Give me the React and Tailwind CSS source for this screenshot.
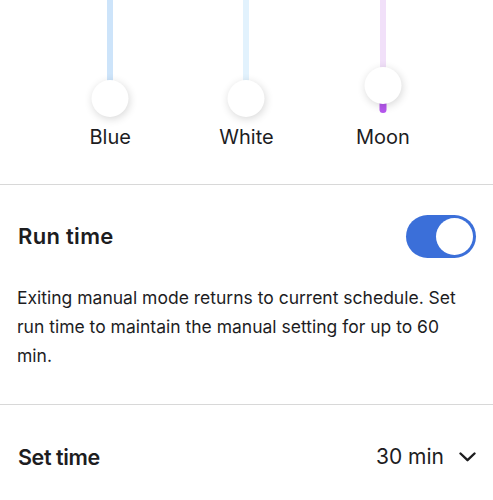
import React from 'react';

const sliders = [
  { label: 'Blue', track: 'bg-[#cde4fa]', knobTop: 'top-[80px]', fill: null },
  { label: 'White', track: 'bg-[#e2f2fd]', knobTop: 'top-[80px]', fill: null },
  { label: 'Moon', track: 'bg-[#f1e0f9]', knobTop: 'top-[67px]', fill: 'bg-[#b657ee]' },
];

function Slider({ s }) {
  return (
    <div className="flex flex-col items-center">
      <div className="relative h-[118px] w-[40px]">
        <div className={`absolute left-1/2 top-0 h-[90px] w-[6px] -translate-x-1/2 ${s.track}`} />
        {s.fill && (
          <div className={`absolute left-1/2 top-[85px] h-[28px] w-[7px] -translate-x-1/2 rounded-b-full ${s.fill}`} />
        )}
        <div
          className={`absolute left-1/2 h-[37px] w-[37px] -translate-x-1/2 rounded-full bg-white shadow-[1px_2px_8px_rgba(0,0,0,0.16)] ${s.knobTop}`}
        />
      </div>
      <span className="mt-[7px] text-[20px] leading-[24px] text-[#1d1d1f]">{s.label}</span>
    </div>
  );
}

export default function App() {
  return (
    <div className="h-[500px] w-full overflow-hidden bg-white font-['Inter',sans-serif] text-[#1d1d1f]">
      <div className="grid h-[184px] grid-cols-3 px-[42px]">
        {sliders.map((s) => (
          <Slider key={s.label} s={s} />
        ))}
      </div>

      <div className="border-t border-[#d8d8d8]">
        <div className="flex items-center justify-between pl-[18px] pr-[17px] pt-[30px]">
          <span className="text-[22px] font-semibold tracking-[0.3px]">Run time</span>
          <div className="flex h-[43px] w-[70px] items-center justify-end rounded-full bg-[#3b6fd9] pr-[3px]">
            <div className="h-[37px] w-[37px] rounded-full bg-white" />
          </div>
        </div>
        <p className="pl-[17px] pr-[24px] pt-[25px] pb-[34px] text-[17.5px] leading-[29px]">
          Exiting manual mode returns to current schedule. Set run time to maintain the manual setting for up to 60 min.
        </p>
      </div>

      <div className="border-t border-[#d8d8d8]">
        <div className="flex items-center justify-between pl-[18px] pr-[17px] pt-[36px]">
          <span className="text-[21.5px] font-semibold tracking-[-0.4px]">Set time</span>
          <div className="flex items-center gap-[15px]">
            <span className="text-[21px]">30 min</span>
            <svg width="17" height="10" viewBox="0 0 17 10" fill="none">
              <path d="M1.5 1.5 L8.5 8.2 L15.5 1.5" stroke="#1d1d1f" strokeWidth="2.4" strokeLinecap="round" strokeLinejoin="round" />
            </svg>
          </div>
        </div>
      </div>
    </div>
  );
}
